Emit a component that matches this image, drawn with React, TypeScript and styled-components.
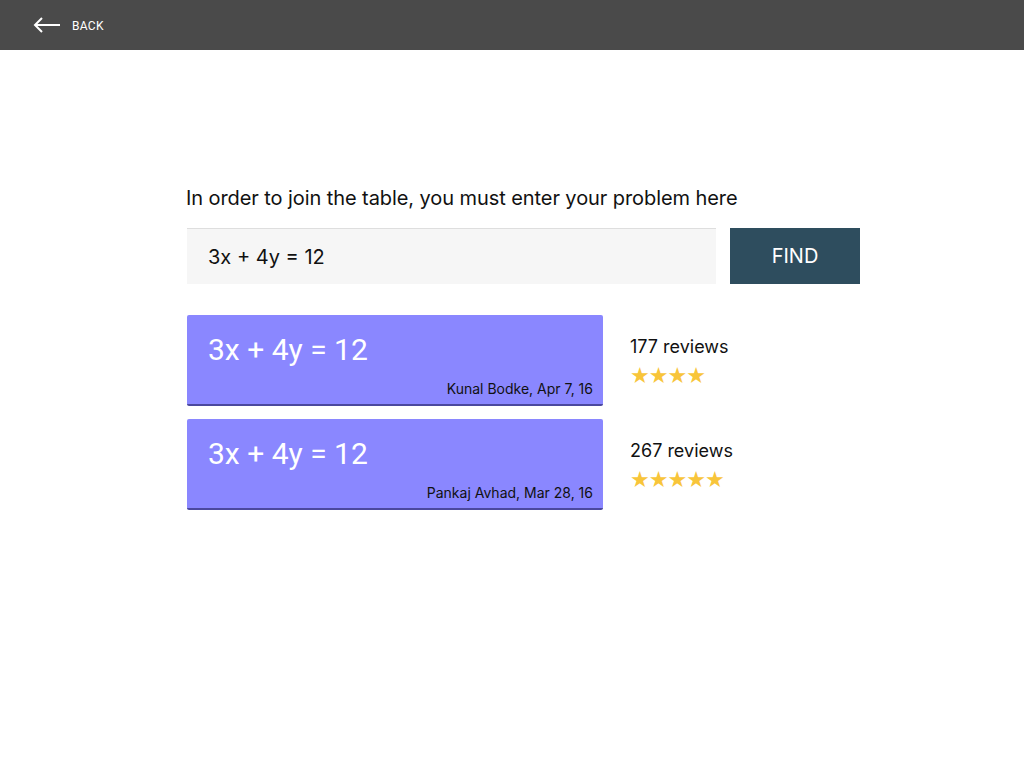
import React from 'react';
import styled, { createGlobalStyle } from 'styled-components';

const GlobalStyle = createGlobalStyle`
    html, body {
        margin: 0;
        padding: 0;
        background: #ffffff;
        font-family: Inter, Roboto, "Liberation Sans", sans-serif;
    }
`;

const Page = styled.div`
    width: 1024px;
    height: 768px;
    display: flex;
    flex-direction: column;
    background: #ffffff;
`;

const TopBar = styled.div`
    height: 50px;
    background: #4a4a4a;
    display: flex;
    align-items: center;
    padding-left: 33px;
    gap: 11px;
    flex-shrink: 0;
`;

const BackLabel = styled.span`
    color: #ffffff;
    font-family: Roboto, sans-serif;
    font-size: 12px;
    letter-spacing: 0.3px;
    margin-top: 1px;
`;

const Content = styled.div`
    padding: 135px 0 0 186px;
    display: flex;
    flex-direction: column;
`;

const Heading = styled.p`
    margin: 0 0 17px 0;
    font-size: 20px;
    color: #111111;
    line-height: 26px;
    letter-spacing: -0.08px;
`;

const SearchRow = styled.div`
    display: flex;
    gap: 14px;
    margin-left: 1px;
`;

const SearchInput = styled.input`
    width: 529px;
    height: 56px;
    box-sizing: border-box;
    background: #f6f6f6;
    border: none;
    border-top: 1px solid #dedede;
    padding: 0 21px;
    font-family: inherit;
    font-size: 20px;
    color: #111111;
    outline: none;
`;

const FindButton = styled.button`
    width: 130px;
    height: 56px;
    background: #2e4d5e;
    border: none;
    color: #ffffff;
    font-family: inherit;
    font-size: 20px;
    cursor: pointer;
`;

const ResultList = styled.div`
    display: flex;
    flex-direction: column;
    gap: 13px;
    margin-top: 31px;
    margin-left: 1px;
`;

const ResultRow = styled.div`
    display: flex;
    align-items: flex-start;
    gap: 27px;
`;

const Card = styled.div`
    width: 416px;
    height: 91px;
    box-sizing: border-box;
    background: #8a87ff;
    border-radius: 2px;
    border-bottom: 2px solid #4b489e;
    padding: 17px 10px 0 21px;
    display: flex;
    flex-direction: column;
`;

const Equation = styled.div`
    color: #ffffff;
    font-family: Roboto, sans-serif;
    font-size: 30px;
    line-height: 36px;
`;

const Author = styled.div`
    align-self: flex-end;
    margin-top: 12px;
    font-size: 14px;
    color: #111111;
`;

const Reviews = styled.div`
    padding-top: 21px;
    display: flex;
    flex-direction: column;
    gap: 7px;
`;

const ReviewCount = styled.div`
    font-size: 18px;
    color: #111111;
`;

const Stars = styled.div`
    color: #f8c53a;
    font-size: 22px;
    line-height: 24px;
    letter-spacing: -1px;
    font-family: "DejaVu Sans", sans-serif;
`;

const results = [
    { author: 'Kunal Bodke, Apr 7, 16', reviews: 177, stars: 4 },
    { author: 'Pankaj Avhad, Mar 28, 16', reviews: 267, stars: 5 },
];

const App = () => {
    return (
        <Page>
            <GlobalStyle />
            <TopBar>
                <svg width="28" height="16" viewBox="0 0 28 16">
                    <path d="M27 8H2M9 1L2 8l7 7" fill="none" stroke="#ffffff" strokeWidth="2" />
                </svg>
                <BackLabel>BACK</BackLabel>
            </TopBar>
            <Content>
                <Heading>In order to join the table, you must enter your problem here</Heading>
                <SearchRow>
                    <SearchInput defaultValue="3x + 4y = 12" />
                    <FindButton>FIND</FindButton>
                </SearchRow>
                <ResultList>
                    {results.map((r) => (
                        <ResultRow key={r.author}>
                            <Card>
                                <Equation>3x + 4y = 12</Equation>
                                <Author>{r.author}</Author>
                            </Card>
                            <Reviews>
                                <ReviewCount>{r.reviews} reviews</ReviewCount>
                                <Stars>{'★'.repeat(r.stars)}</Stars>
                            </Reviews>
                        </ResultRow>
                    ))}
                </ResultList>
            </Content>
        </Page>
    );
};

export default App;
